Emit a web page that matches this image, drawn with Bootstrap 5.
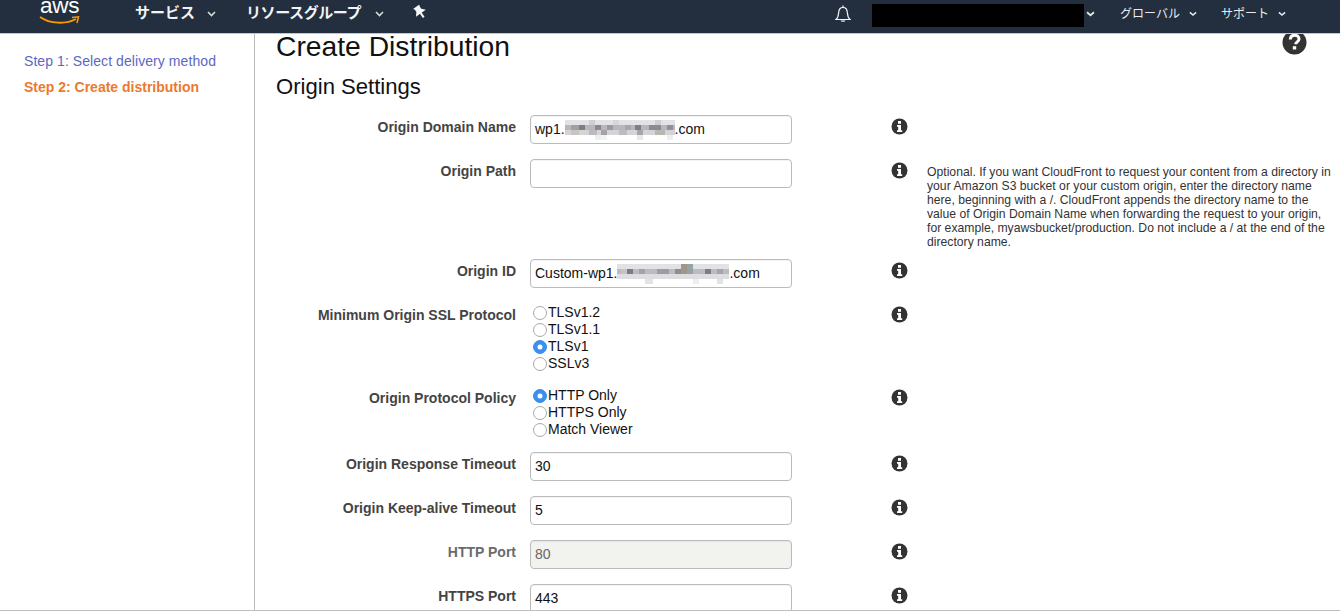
<!DOCTYPE html>
<html lang="en">
<head>
<meta charset="utf-8">
<title>Create Distribution</title>
<link href="https://cdn.jsdelivr.net/npm/bootstrap@5.3.0/dist/css/bootstrap.min.css" rel="stylesheet">
<style>
html,body{height:100%;overflow:hidden;background:#fff}
body{font-family:"Liberation Sans",Arial,sans-serif;font-size:14px;color:#111}
.shell{height:615px}
.topbar{height:34px;background:#232f3e;border-bottom:1px solid #c4c7ca;color:#fff;font-family:"Liberation Sans","Noto Sans CJK JP",sans-serif;flex:none;align-items:flex-start}
.logo-box{width:135px;padding-left:40px;height:33px;overflow:hidden}
.logo-word{font-size:22.5px;line-height:20px;margin-top:-4px;letter-spacing:-.3px;display:block}
.logo-smile{display:block;margin-top:-1px;margin-left:-1px}
.nav-main{font-size:15px;font-weight:700;height:27px;color:#f2f3f4;white-space:nowrap}
.nav-tight{letter-spacing:-.4px}
.nav-sub{font-size:12px;height:27px;color:#e9ebed;white-space:nowrap}
.m1{width:111px}.m2{width:167px}.m3{width:422px;height:24px}.m4{width:37px;height:28px}
.m5{width:212px;height:23px;background:#000;margin-top:4px;margin-right:2px}
.caret-top{margin-top:11px}
.m6{margin-left:25px;width:101px}
.chev{margin-left:12px;flex:none}
.nav-tight .chev{margin-left:14px}
.chev-sm{margin-left:9px;flex:none}
.body-row{height:576px;flex:none}
.sidenav{width:255px;border-right:1px solid #bdbdbd;padding:19px 0 0 24px;flex:none}
.step-link{font-size:14px;line-height:16px;color:#5b68c3;text-decoration:none;display:block;margin-bottom:10px;letter-spacing:.07px}
.step-on{color:#ea7a30;font-weight:700;letter-spacing:0}
.content{flex:1;min-width:0;overflow:hidden;position:relative}
.page-title{font-size:28.25px;line-height:26px;font-weight:400;margin:-1px 0 0 21px;color:#111}
.section-title{font-size:22.1px;line-height:26px;font-weight:400;margin:15px 0 15px 21px;color:#111}
.help-main{position:absolute;top:-4px;right:33.500px}
.frow{display:grid;grid-template-columns:261px 276px 116px 410px;margin-bottom:15px}
.flabel{font-weight:700;color:#444;text-align:right;line-height:16px;padding-top:4px}
.fmute{color:#6b6b6b}
.fcell{margin-left:14px;width:262px}
.fbox{height:29px;border:1px solid #bbb;border-radius:4px;padding:0 4px 2px;font-size:14px;line-height:26px;color:#111;background:#fff;box-shadow:inset 0 1px 1px rgba(0,0,0,.05);white-space:nowrap;display:flex;align-items:center}
.fbox.form-control{min-height:0}
.boxoff{background:#f2f2ef;color:#666}
.ficon{margin-left:99px;margin-top:3px;display:block}
.fhelp{font-size:12.2px;line-height:14.1px;color:#333;padding-top:6px;margin-left:19px;width:406px}
.frow-tall{height:85px}
.radios{height:68px}
.radios3{height:51px}
.radio-stack{padding-top:1px}
.radio-line{display:flex;align-items:center;height:17px;margin:0;color:#111;line-height:17px}
.radio-line .form-check-input{width:14px;height:14px;margin:0 1.500px 0 2.500px;float:none;flex:none;border-color:#a9a9a9}
.radio-line .form-check-input:checked{background-color:#3b8fee;border-color:#3b8fee;background-size:10px}
.mosaic{display:block;flex:none;margin-top:3px}
.footline{height:1px;background:#bdbdbd;flex:none}
</style>
</head>
<body>
<svg width="0" height="0" class="d-block" aria-hidden="true"><defs>
  <symbol id="info" viewBox="0 0 17 17"><circle cx="8.500" cy="8.500" r="8" fill="#333"/><rect x="7" y="3" width="3" height="2.800" fill="#fff"/><path d="M6 7h4v5.200h1.200V14H6v-1.800h1.200V8.800H6z" fill="#fff"/></symbol>
  <symbol id="chevron" viewBox="0 0 9 6"><path d="M1 1l3.500 3.500L8 1" fill="none" stroke="#d5dbdb" stroke-width="1.600"/></symbol>
  <symbol id="caret" viewBox="0 0 9 6"><path d="M1 1.200l3.500 3 3.500-3" fill="none" stroke="#e4e7e9" stroke-width="1.800"/></symbol>
</defs></svg>
<div class="shell d-flex flex-column">
  <header class="topbar d-flex">
    <div class="logo-box">
      <span class="logo-word">aws</span>
      <svg class="logo-smile" width="41" height="10" viewBox="0 0 41 10"><path d="M1 2C11 9 27 9.500 37 4" fill="none" stroke="#f90" stroke-width="1.800"/><path d="M33 2.500 39.500 1.800 38 8" fill="none" stroke="#f90" stroke-width="1.500"/></svg>
    </div>
    <div class="nav-main m1 d-flex align-items-center">サービス<svg class="chev" width="9" height="6"><use href="#chevron"/></svg></div>
    <div class="nav-main nav-tight m2 d-flex align-items-center">リソースグループ<svg class="chev" width="9" height="6"><use href="#chevron"/></svg></div>
    <div class="m3 d-flex align-items-center"><svg width="14" height="14" viewBox="0 0 14 14"><g transform="rotate(-35 7 7)"><path d="M3 .5h8L10 2V5L13 8.500H1L4 5V2z" fill="#f6f7f8"/><path d="M7 8v5.500" stroke="#f6f7f8" stroke-width="2"/></g></svg></div>
    <div class="m4 d-flex align-items-center"><svg width="16" height="18" viewBox="0 0 16 18"><path d="M1 14.500c1.800-1.500 2.400-3.500 2.600-6.500C3.800 4.500 5.500 2.300 8 2.300s4.200 2.200 4.400 5.700c.2 3 .8 5 2.600 6.500z" fill="none" stroke="#f2f3f4" stroke-width="1.200"/><path d="M5.500 15.500h5c-.5 1.800-4.500 1.800-5 0z" fill="#f2f3f4"/><path d="M8 .5v2" stroke="#f2f3f4" stroke-width="1.200"/></svg></div>
    <div class="m5"></div>
    <svg class="caret-top" width="9" height="6"><use href="#caret"/></svg>
    <div class="nav-sub m6 d-flex align-items-center">グローバル<svg class="chev-sm" width="8" height="6"><use href="#caret"/></svg></div>
    <div class="nav-sub d-flex align-items-center">サポート<svg class="chev-sm" width="8" height="6"><use href="#caret"/></svg></div>
  </header>

  <div class="body-row d-flex">
    <nav class="sidenav">
      <a class="step-link" href="#">Step 1: Select delivery method</a>
      <a class="step-link step-on" href="#">Step 2: Create distribution</a>
    </nav>
    <main class="content">
      <h1 class="page-title">Create Distribution</h1>
      <svg class="help-main" width="25" height="25" viewBox="0 0 25 25"><circle cx="12.500" cy="12.500" r="12" fill="#333"/><path d="M8.300 9.500c.2-3 2.300-4.300 4.400-4.300 2.400 0 4.300 1.500 4.300 3.700 0 3-3.300 3-3.300 5.300" fill="none" stroke="#fff" stroke-width="3"/><rect x="10.800" y="16.200" width="3.400" height="3.300" fill="#fff"/></svg>
      <h2 class="section-title">Origin Settings</h2>

      <div class="frow">
        <div class="flabel">Origin Domain Name</div>
        <div class="fcell"><div class="form-control fbox">wp1.<svg class="mosaic" width="110" height="20" viewBox="0 0 110 20"><rect y="0" width="110" height="5" fill="#e3e2e6"/><rect x="0" y="5" width="110" height="5" fill="#b9b7bb"/><rect y="10" width="110" height="5" fill="#d4d3d6"/><rect x="24" y="0" width="6" height="5" fill="#cfced3"/><rect x="48" y="0" width="6" height="5" fill="#d6d5d9"/><rect x="90" y="0" width="6" height="5" fill="#cfcfd3"/><rect x="6" y="5" width="8" height="5" fill="#a09fa2"/><rect x="14" y="5" width="6" height="5" fill="#7c7e86"/><rect x="30" y="5" width="6" height="5" fill="#8d8591"/><rect x="42" y="5" width="6" height="5" fill="#9a9a9c"/><rect x="60" y="5" width="6" height="5" fill="#a8a7aa"/><rect x="70" y="5" width="6" height="5" fill="#7f7e88"/><rect x="84" y="5" width="12" height="5" fill="#8c8a92"/><rect x="102" y="5" width="6" height="5" fill="#8e919a"/><rect x="6" y="10" width="8" height="5" fill="#c9c5be"/><rect x="24" y="10" width="8" height="5" fill="#bbb9bd"/><rect x="36" y="10" width="6" height="5" fill="#a3a2a6"/><rect x="54" y="10" width="8" height="5" fill="#bdbcbf"/><rect x="72" y="10" width="6" height="5" fill="#a5a5aa"/><rect x="90" y="10" width="10" height="5" fill="#b9b8b0"/><rect x="30" y="15" width="6" height="5" fill="#eceef0"/><rect x="36" y="15" width="6" height="5" fill="#f0f3f6"/><rect x="72" y="15" width="6" height="5" fill="#e8e8ea"/><rect x="102" y="15" width="6" height="5" fill="#eeeef0"/></svg>.com</div></div>
        <svg class="ficon" width="17" height="17"><use href="#info"/></svg>
        <div></div>
      </div>

      <div class="frow frow-tall">
        <div class="flabel">Origin Path</div>
        <div class="fcell"><input class="form-control fbox" type="text" aria-label="Origin Path"></div>
        <svg class="ficon" width="17" height="17"><use href="#info"/></svg>
        <div class="fhelp">Optional. If you want CloudFront to request your content from a directory in your Amazon S3 bucket or your custom origin, enter the directory name here, beginning with a /. CloudFront appends the directory name to the value of Origin Domain Name when forwarding the request to your origin, for example, myawsbucket/production. Do not include a / at the end of the directory name.</div>
      </div>

      <div class="frow">
        <div class="flabel">Origin ID</div>
        <div class="fcell"><div class="form-control fbox">Custom-wp1.<svg class="mosaic" width="112" height="20" viewBox="0 0 112 20"><rect y="0" width="112" height="5" fill="#e2e2e6"/><rect y="5" width="112" height="5" fill="#bcbbc0"/><rect y="10" width="112" height="5" fill="#dedde0"/><rect x="4" y="5" width="6" height="5" fill="#c9c5be"/><rect x="10" y="5" width="6" height="5" fill="#7b7c86"/><rect x="22" y="5" width="6" height="5" fill="#a4a3a9"/><rect x="40" y="5" width="12" height="5" fill="#a09ba3"/><rect x="58" y="5" width="6" height="5" fill="#8e8d93"/><rect x="64" y="0" width="6" height="10" fill="#a0968c"/><rect x="70" y="0" width="6" height="10" fill="#93a3a6"/><rect x="88" y="5" width="6" height="5" fill="#7c7e86"/><rect x="100" y="5" width="6" height="5" fill="#a4a4a9"/><rect x="28" y="15" width="8" height="5" fill="#e3e2e4"/><rect x="76" y="15" width="6" height="5" fill="#eceef0"/><rect x="100" y="15" width="6" height="5" fill="#e3e2e4"/></svg>.com</div></div>
        <svg class="ficon" width="17" height="17"><use href="#info"/></svg>
        <div></div>
      </div>

      <div class="frow radios">
        <div class="flabel">Minimum Origin SSL Protocol</div>
        <div class="fcell radio-stack">
          <label class="radio-line"><input class="form-check-input" type="radio" name="ssl">TLSv1.2</label>
          <label class="radio-line"><input class="form-check-input" type="radio" name="ssl">TLSv1.1</label>
          <label class="radio-line"><input class="form-check-input" type="radio" name="ssl" checked>TLSv1</label>
          <label class="radio-line"><input class="form-check-input" type="radio" name="ssl">SSLv3</label>
        </div>
        <svg class="ficon" width="17" height="17"><use href="#info"/></svg>
        <div></div>
      </div>

      <div class="frow radios3">
        <div class="flabel">Origin Protocol Policy</div>
        <div class="fcell radio-stack">
          <label class="radio-line"><input class="form-check-input" type="radio" name="pol" checked>HTTP Only</label>
          <label class="radio-line"><input class="form-check-input" type="radio" name="pol">HTTPS Only</label>
          <label class="radio-line"><input class="form-check-input" type="radio" name="pol">Match Viewer</label>
        </div>
        <svg class="ficon" width="17" height="17"><use href="#info"/></svg>
        <div></div>
      </div>

      <div class="frow">
        <div class="flabel">Origin Response Timeout</div>
        <div class="fcell"><div class="form-control fbox">30</div></div>
        <svg class="ficon" width="17" height="17"><use href="#info"/></svg>
        <div></div>
      </div>

      <div class="frow">
        <div class="flabel">Origin Keep-alive Timeout</div>
        <div class="fcell"><div class="form-control fbox">5</div></div>
        <svg class="ficon" width="17" height="17"><use href="#info"/></svg>
        <div></div>
      </div>

      <div class="frow">
        <div class="flabel fmute">HTTP Port</div>
        <div class="fcell"><div class="form-control fbox boxoff">80</div></div>
        <svg class="ficon" width="17" height="17"><use href="#info"/></svg>
        <div></div>
      </div>

      <div class="frow">
        <div class="flabel">HTTPS Port</div>
        <div class="fcell"><div class="form-control fbox">443</div></div>
        <svg class="ficon" width="17" height="17"><use href="#info"/></svg>
        <div></div>
      </div>
    </main>
  </div>
  <div class="footline"></div>
</div>
<script src="https://cdn.jsdelivr.net/npm/bootstrap@5.3.0/dist/js/bootstrap.bundle.min.js"></script>
</body>
</html>
